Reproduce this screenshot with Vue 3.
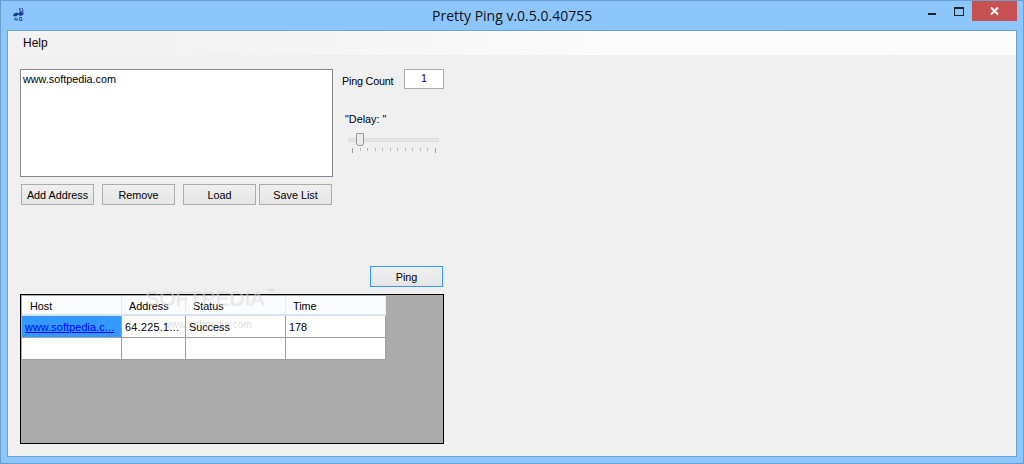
<script setup>
const buttons = ['Add Address', 'Remove', 'Load', 'Save List']
const ticks = Array.from({ length: 12 }, (_, i) => i)
const columns = [
  { name: 'Host', cls: 'c1' },
  { name: 'Address', cls: 'c2' },
  { name: 'Status', cls: 'c3' },
  { name: 'Time', cls: 'c4' }
]
</script>

<template>
  <div class="window">
    <header class="titlebar">
      <svg class="appicon" width="13" height="13" viewBox="0 0 13 13">
        <path d="M7 0.5 L11 0.5 L11.5 3 L9.5 5 L12 4.5 L11 7 L8 8 L6.5 6.5 L4 8.5 L1 8 L2 5.5 L5 4.5 L6.5 5.5 L8.5 3 L7 2.5 Z" fill="#1d3a9e" />
        <path d="M8 1.2 L10.3 1.2 L10.4 2.6 L9 3.6 Z" fill="#bcd4f6" />
        <path d="M3 10 L3 12.5 M3 10 L5 12.5 M5 10 L5 12.5" stroke="#2b4fb5" stroke-width="1" fill="none" />
        <path d="M10 9.5 L7.5 9.5 L7.5 12.5 L10 12.5 L10 11 L9 11" stroke="#2b4fb5" stroke-width="1" fill="none" />
      </svg>
      <div class="title">Pretty Ping v.0.5.0.40755</div>
      <div class="controls">
        <span class="min"></span>
        <span class="max"></span>
        <span class="close">
          <svg width="9" height="8" viewBox="0 0 9 8">
            <path d="M1 0.5 L8 7.5 M8 0.5 L1 7.5" stroke="#fff" stroke-width="2" fill="none" />
          </svg>
        </span>
      </div>
    </header>

    <main class="client">
      <nav class="menu"><span>Help</span></nav>
      <div class="content">
        <section class="top">
          <div class="left">
            <div class="listbox">www.softpedia.com</div>
            <div class="buttons">
              <button v-for="b in buttons" :key="b" class="btn">{{ b }}</button>
            </div>
          </div>
          <div class="side">
            <div class="count">
              <label>Ping Count</label>
              <div class="field">1</div>
            </div>
            <div class="delay">"Delay: "</div>
            <div class="slider">
              <div class="track"></div>
              <div class="thumb"></div>
              <div class="ticks">
                <i v-for="t in ticks" :key="t" :class="{ long: t === 0 || t === 11 }"></i>
              </div>
            </div>
          </div>
        </section>

        <div class="pingrow"><button class="btn ping">Ping</button></div>

        <section class="grid">
          <div class="row head">
            <div v-for="c in columns" :key="c.name" :class="['cell', c.cls]">{{ c.name }}</div>
          </div>
          <div class="row">
            <div class="cell c1 selected"><a>www.softpedia.c...</a></div>
            <div class="cell c2">64.225.1...</div>
            <div class="cell c3">Success</div>
            <div class="cell c4">178</div>
          </div>
          <div class="row">
            <div class="cell c1"></div>
            <div class="cell c2"></div>
            <div class="cell c3"></div>
            <div class="cell c4"></div>
          </div>
        </section>
      </div>
    </main>
  </div>
</template>

<style>
html, body { margin: 0; padding: 0; background: #8cc6fb; }
</style>

<style scoped>
.window {
  width: 1024px;
  height: 464px;
  box-sizing: border-box;
  background: #8cc6fb;
  border: 1px solid #6c9fce;
  display: flex;
  flex-direction: column;
  font-family: "Liberation Sans", Arial, sans-serif;
  font-size: 10.8px;
  color: #000;
  overflow: hidden;
}
.titlebar {
  height: 29px;
  flex: none;
  display: flex;
  align-items: flex-start;
  position: relative;
}
.appicon { margin: 7px 0 0 11px; }
.title {
  position: absolute;
  left: 431px;
  top: 6px;
  font-family: "Open Sans", sans-serif;
  font-size: 14px;
  line-height: 18px;
  color: #111;
  white-space: nowrap;
}
.controls {
  margin-left: auto;
  margin-right: 6px;
  display: flex;
  align-items: flex-start;
}
.min {
  width: 8px;
  height: 2px;
  background: #222;
  margin: 12px 18px 0 0;
}
.max {
  width: 8px;
  height: 6px;
  border: 1px solid #222;
  border-top-width: 2px;
  margin: 6px 8px 0 0;
}
.close {
  width: 45px;
  height: 20px;
  background: #c75050;
  display: flex;
  align-items: center;
  justify-content: center;
}
.client {
  flex: 1;
  margin: 0 6px 6px 6px;
  border: 1px solid #6ea2d3;
  background: #f0f0f0;
  display: flex;
  flex-direction: column;
  min-height: 0;
}
.menu {
  height: 24px;
  flex: none;
  background: linear-gradient(to right, #f2f2f2 0%, #f4f4f4 25%, #fbfbfb 60%, #fcfcfc 100%);
  padding-left: 15px;
  line-height: 24px;
  font-size: 12px;
  color: #200;
}
.content { padding: 14px 0 0 12px; }
.top { display: flex; }
.left { width: 313px; }
.listbox {
  height: 102px;
  width: 307px;
  background: #fff;
  border: 1px solid #828790;
  padding: 2px;
  line-height: 14px;
}
.buttons {
  display: flex;
  margin: 7px 0 0 1px;
}
.btn {
  flex: none;
  width: 73px;
  height: 21px;
  box-sizing: border-box;
  border: 1px solid #acacac;
  background: linear-gradient(#f0f0f0, #e5e5e5);
  font-family: "Liberation Sans", Arial, sans-serif;
  font-size: 10.8px;
  color: #000;
  padding: 0;
  margin: 0;
}
.buttons .btn { margin-right: 8px; }
.buttons .btn:nth-child(3) { margin-right: 3px; }
.buttons .btn:nth-child(4) { margin-right: 0; }
.side { margin-left: 9px; width: 102px; }
.count { display: flex; align-items: center; height: 20px; }
.count label { width: 62px; padding-top: 3px; letter-spacing: -0.2px; }
.field {
  width: 38px;
  height: 18px;
  border: 1px solid #acacac;
  background: #fff;
  text-align: center;
  line-height: 17px;
  color: #204;
}
.delay { margin: 23px 0 0 3px; line-height: 14px; }
.slider { position: relative; margin: 6px 0 0 6px; width: 91px; height: 26px; }
.track {
  position: absolute;
  left: 0; top: 6px;
  width: 91px; height: 4px;
  background: #e6e6e6;
  border: 1px solid #dcdcdc;
  box-sizing: border-box;
}
.thumb {
  position: absolute;
  left: 8px; top: 1px;
  width: 6px; height: 11px;
  background: #ececec;
  border: 1px solid #9a9a9a;
  border-radius: 1px 1px 3px 3px;
}
.ticks {
  position: absolute;
  left: 4px; top: 16px;
  width: 84px;
  display: flex;
  justify-content: space-between;
  align-items: flex-start;
}
.ticks i { display: block; width: 1px; height: 3px; background: #b8b8b8; }
.ticks i.long { height: 5px; background: #a0a0a0; }
.pingrow {
  display: flex;
  padding-left: 350px;
  margin-top: 61px;
  position: relative;
}
.ping { border-color: #3399ff; }
.pingrow::after {
  content: "SOFTPEDIA";
  position: absolute;
  left: 125px;
  top: 20px;
  font-size: 21px;
  letter-spacing: 0;
  color: rgba(225, 225, 225, 0.55);
  text-shadow: 1px 1px 0 rgba(170, 170, 170, 0.18);
  white-space: nowrap;
  z-index: 2;
  pointer-events: none;
}
.grid {
  position: relative;
  margin-top: 7px;
  width: 424px;
  height: 150px;
  box-sizing: border-box;
  border: 1px solid #000;
  background: #ababab;
  padding-top: 1px;
  padding-left: 1px;
}
.grid::before {
  content: "™";
  position: absolute;
  left: 245px;
  top: -8px;
  font-size: 8px;
  color: rgba(190, 190, 190, 0.6);
  pointer-events: none;
}
.grid::after {
  content: "www.softpedia.com";
  position: absolute;
  left: 143px;
  top: 24px;
  font-size: 10px;
  letter-spacing: 0.1px;
  color: rgba(130, 130, 130, 0.3);
  white-space: nowrap;
  pointer-events: none;
}
.row { display: flex; height: 22px; }
.row.head { height: 20px; }
.cell {
  box-sizing: border-box;
  background: #fff;
  border-right: 1px solid #a0a0a0;
  border-bottom: 1px solid #a0a0a0;
  line-height: 22px;
  padding-left: 3px;
  white-space: nowrap;
  overflow: hidden;
}
.c1 { width: 100px; }
.c2 { width: 64px; letter-spacing: 0.3px; }
.c3 { width: 100px; }
.c4 { width: 100px; }
.head .cell {
  background: #fbfcfe;
  border-right: 1px solid #e3edf7;
  border-bottom: 2px solid #d6e1ee;
  padding-left: 8px;
  line-height: 20px;
  letter-spacing: 0;
}
.head .c2, .head .c3, .head .c4 { padding-left: 7px; }
.selected { background: #3399ff; }
.selected a { color: #0000ff; text-decoration: underline; letter-spacing: 0.12px; }
</style>
